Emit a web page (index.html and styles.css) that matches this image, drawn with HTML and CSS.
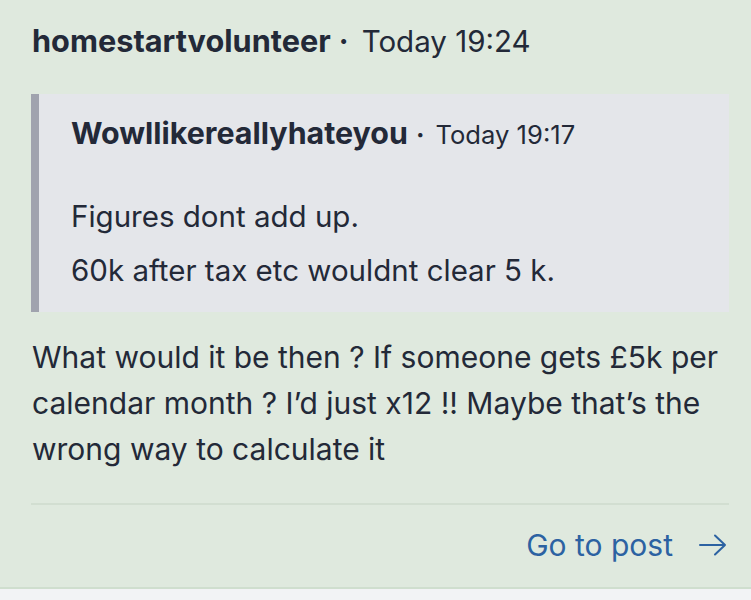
FILE: index.html
```html
<!DOCTYPE html>
<html>
<head>
<meta charset="utf-8">
<link rel="stylesheet" href="styles.css">
</head>
<body>
<div class="card">
  <div class="meta"><span class="author">homestartvolunteer</span><span class="dot">·</span><span class="time">Today 19:24</span></div>
  <blockquote class="quote">
    <div class="qmeta"><span class="qauthor">Wowllikereallyhateyou</span><span class="qdot">·</span><span class="qtime">Today 19:17</span></div>
    <p class="qline first">Figures dont add up.</p>
    <p class="qline">60k after tax etc wouldnt clear 5 k.</p>
  </blockquote>
  <p class="body">What would it be then ? If someone gets £5k per calendar month ? I’d just x12 !! Maybe that’s the wrong way to calculate it</p>
  <hr class="divider">
  <div class="actions">
    <a class="goto" href="#">Go to post <svg class="arrow" width="28" height="22" viewBox="0 0 28 22"><path d="M1 11 H26 M16 1.5 L26 11 L16 20.5" fill="none" stroke="#2c62a2" stroke-width="2" stroke-linecap="round" stroke-linejoin="round"/></svg></a>
  </div>
</div>
</body>
</html>
```
FILE: styles.css
```css
html, body { margin: 0; padding: 0; }
body { background: #f2f3f5; font-family: Inter, "Noto Sans", sans-serif; color: #232938; }
.card {
  background: #dfe9de;
  padding: 23px 22px 24px 32px;
  border-bottom: 2px solid #cfdece;
}
.meta { font-size: 29.5px; line-height: 36px; height: 36px; white-space: nowrap; }
.meta span, .qmeta span { line-height: 1; }
.author { font-weight: 700; font-size: 30.7px; }
.dot { margin: 0 13px 0 8px; font-weight: 700; }
.quote {
  margin: 35px 0 0 -1px;
  background: #e4e6ea;
  border-left: 8px solid #a0a3ae;
  padding: 23px 20px 24px 32px;
}
.qmeta { font-size: 25.6px; line-height: 36px; height: 36px; white-space: nowrap; }
.qauthor { font-weight: 700; font-size: 30.4px; }
.qdot { margin: 0 11px 0 8px; font-weight: 700; }
.qline { margin: 0; font-size: 29.5px; line-height: 36px; }
.qline.first { margin-top: 45px; }
.qline + .qline { margin-top: 18px; }
.body { margin: 22px 0 0; font-size: 30px; line-height: 46px; }
.divider { margin: 31px 0 0 -1px; border: 0; height: 2px; background: #d2ded1; }
.actions { display: flex; justify-content: flex-end; margin-top: 22px; }
.goto { color: #2c62a2; text-decoration: none; font-size: 30px; line-height: 36px; display: flex; align-items: center; gap: 26px; margin-right: 2px; }
.arrow { display: block; }
```
